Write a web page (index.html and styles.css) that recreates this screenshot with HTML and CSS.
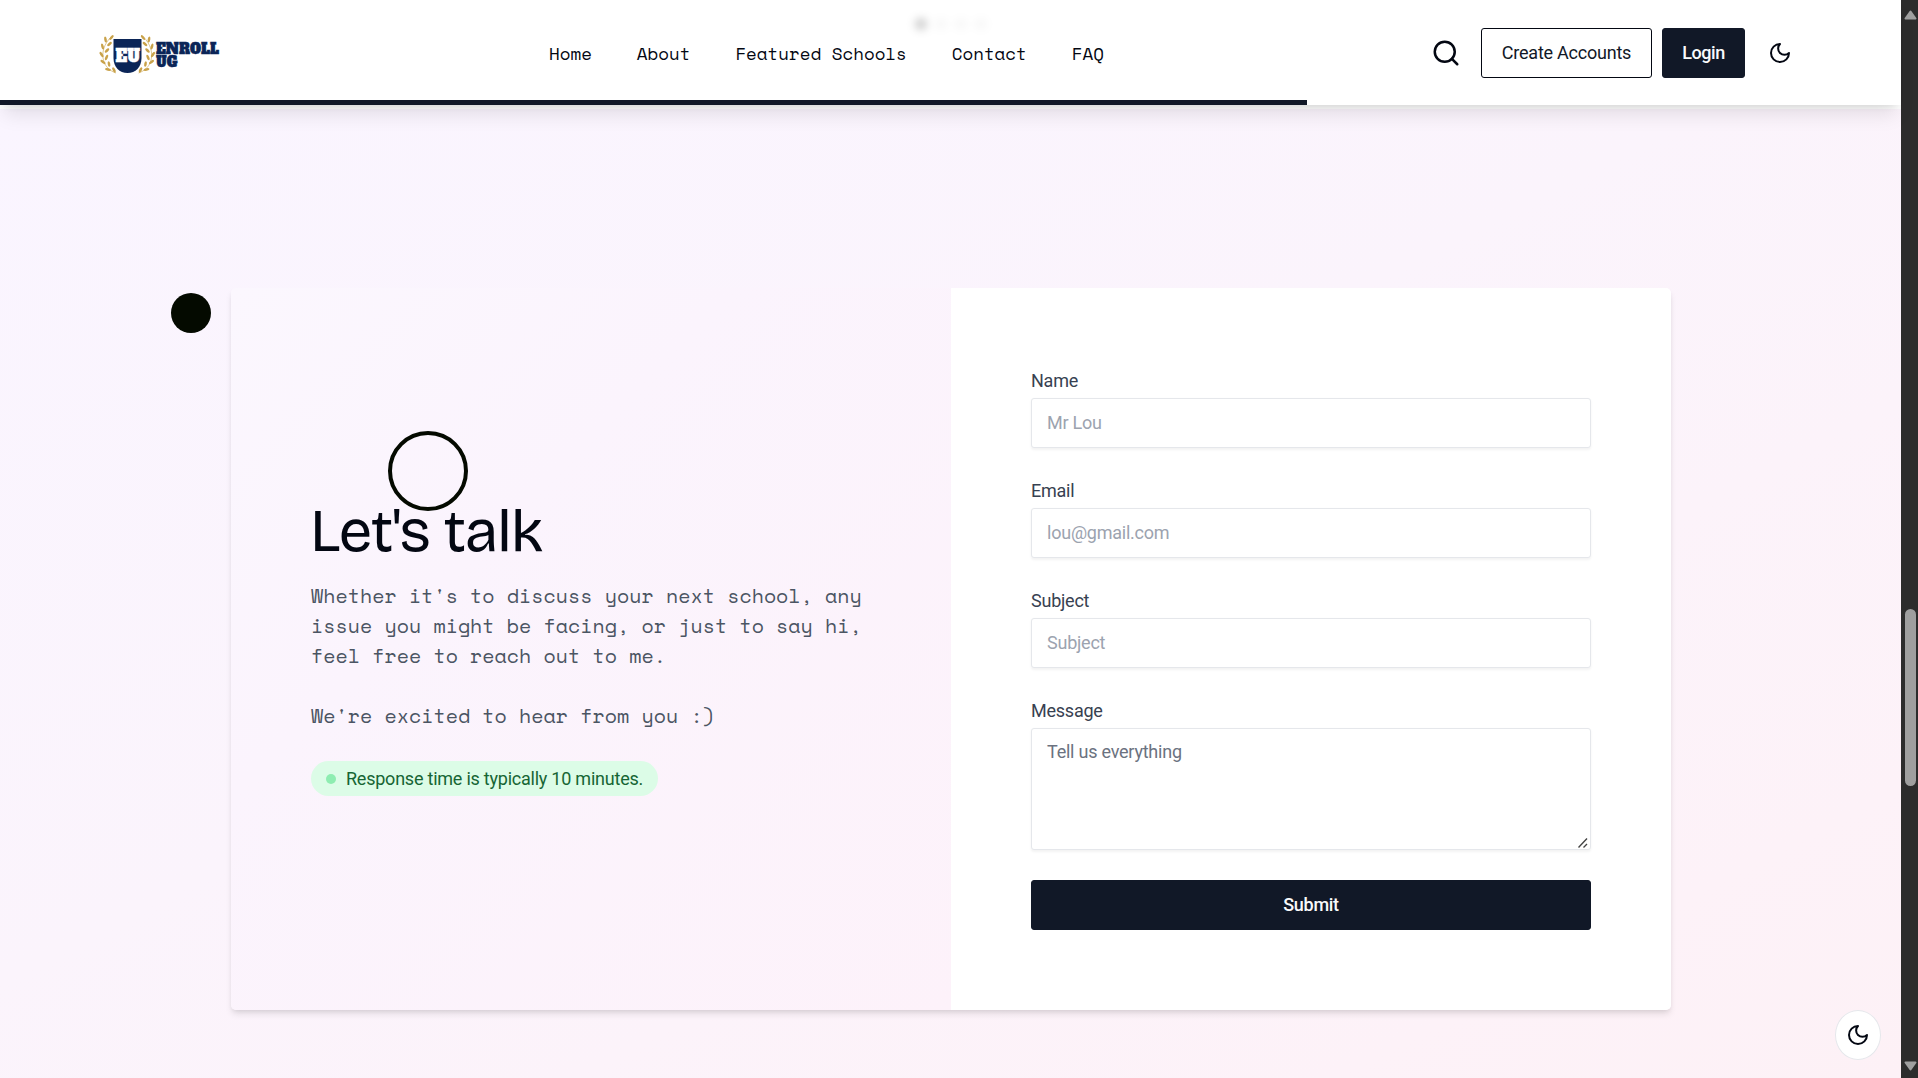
FILE: index.html
```html
<!DOCTYPE html>
<html lang="en">
<head>
<meta charset="utf-8">
<title>Enroll UG</title>
<link rel="stylesheet" href="styles.css">
</head>
<body>
<div class="page">
  <header class="header">
    <div class="bar">
      <svg class="logo" width="122" height="44" viewBox="0 0 122 44">
        <defs>
          <g id="laurel" fill="#c9a24a">
            <path d="M11 4C4 11 1 20 4 29c2 5 6 9 12 11" fill="none" stroke="#c9a24a" stroke-width=".6"/>
            <ellipse cx="11.500" cy="4.500" rx="3" ry="1.300" transform="rotate(-50 11.500 4.500)"/>
            <ellipse cx="5.500" cy="6.500" rx="3" ry="1.300" transform="rotate(-100 5.500 6.500)"/>
            <ellipse cx="9.500" cy="11" rx="2.900" ry="1.300" transform="rotate(-40 9.500 11)"/>
            <ellipse cx="2.500" cy="13.500" rx="3" ry="1.300" transform="rotate(75 2.500 13.500)"/>
            <ellipse cx="7" cy="17.500" rx="2.900" ry="1.300" transform="rotate(-45 7 17.500)"/>
            <ellipse cx="1.500" cy="21.500" rx="3" ry="1.300" transform="rotate(55 1.500 21.500)"/>
            <ellipse cx="6.500" cy="24.500" rx="2.900" ry="1.300" transform="rotate(-65 6.500 24.500)"/>
            <ellipse cx="3" cy="29" rx="3" ry="1.300" transform="rotate(35 3 29)"/>
            <ellipse cx="9" cy="31" rx="2.900" ry="1.300" transform="rotate(-100 9 31)"/>
            <ellipse cx="8" cy="36.500" rx="3" ry="1.300" transform="rotate(10 8 36.500)"/>
            <ellipse cx="14" cy="37" rx="2.900" ry="1.300" transform="rotate(60 14 37)"/>
          </g>
        </defs>
        <use href="#laurel"/>
        <use href="#laurel" transform="translate(54.500 0) scale(-1 1)"/>
        <path d="M13.500 6h28v19c0 9-6 15-14 15s-14-6-14-15z" fill="#0b2557"/>
        <text class="logo-mark" x="15.500" y="28.500" textLength="24.500" lengthAdjust="spacingAndGlyphs">EU</text>
        <text class="logo-name" x="56" y="20.500" textLength="63" lengthAdjust="spacingAndGlyphs">ENROLL</text>
        <text class="logo-name" x="56" y="34" textLength="21.500" lengthAdjust="spacingAndGlyphs">UG</text>
      </svg>
      <nav class="nav">
        <a>Home</a><a>About</a><a>Featured Schools</a><a>Contact</a><a>FAQ</a>
      </nav>
      <div class="actions">
        <svg class="icon search" width="30" height="30" viewBox="0 0 24 24"><circle cx="11" cy="11" r="8"/><path d="m21 21-4.300-4.300"/></svg>
        <button class="btn outline">Create Accounts</button>
        <button class="btn solid login">Login</button>
        <svg class="icon" width="24" height="24" viewBox="0 0 24 24"><path d="M12 3a6 6 0 0 0 9 9 9 9 0 1 1-9-9Z"/></svg>
      </div>
    </div>
    <div class="progress"></div>
    <div class="slides"><i></i><i></i><i></i><i></i></div>
  </header>

  <main class="contact">
    <section class="card">
      <div class="intro">
        <h1>Let's talk</h1>
        <p>Whether it's to discuss your next school, any<br>issue you might be facing, or just to say hi,<br>feel free to reach out to me.<br><br>We're excited to hear from you :)</p>
        <div class="badge"><span class="dot"></span><span class="badge-text">Response time is typically 10 minutes.</span></div>
      </div>
      <form class="form">
        <label><span>Name</span><input type="text" placeholder="Mr Lou"></label>
        <label><span>Email</span><input type="text" placeholder="lou@gmail.com"></label>
        <label><span>Subject</span><input type="text" placeholder="Subject"></label>
        <label class="message"><span>Message</span><textarea placeholder="Tell us everything"></textarea>
          <svg class="grip" width="10" height="10" viewBox="0 0 10 10"><path d="M.5 9.500 9 .5M5.500 9.500 9 6"/></svg></label>
        <button class="btn solid submit" type="button">Submit</button>
      </form>
    </section>
  </main>

  <div class="cursor-dot"></div>
  <div class="cursor-ring"></div>
  <button class="theme" aria-label="Toggle theme"><svg class="icon" width="24" height="24" viewBox="0 0 24 24"><path d="M12 3a6 6 0 0 0 9 9 9 9 0 1 1-9-9Z"/></svg></button>
</div>
<div class="scrollbar">
  <svg width="13" height="10" viewBox="0 0 13 10"><path d="M6.500 1.500 11.500 8.500H1.500Z"/></svg>
  <div class="thumb"></div>
  <svg width="13" height="10" viewBox="0 0 13 10"><path d="M6.500 8.500 11.500 1.500H1.500Z"/></svg>
</div>
</body>
</html>
```
FILE: styles.css
```css
* { box-sizing: border-box; }

body {
  margin: 0;
  height: 1078px;
  display: flex;
  overflow: hidden;
  color: #030712;
  font: 18px/25px Roboto, "Liberation Sans", sans-serif;
  letter-spacing: -.23px;
}

.page {
  position: relative;
  width: 1901px;
  height: 1078px;
  display: flex;
  flex-direction: column;
}

.header {
  position: relative;
  z-index: 2;
  height: 105px;
  background: #fff;
  box-shadow: 0 12.5px 18.75px -3.75px rgba(0, 0, 0, .1), 0 5px 7.5px -5px rgba(0, 0, 0, .1);
}

.bar {
  height: 100px;
  padding: 6px 109px 0 100px;
  display: flex;
  align-items: center;
}

.logo {
  display: block;
  margin-top: 3px;
  overflow: visible;
}

.logo-mark, .logo-name {
  font-family: "Alfa Slab One", "DejaVu Serif", serif;
  font-weight: 400;
  font-size: 15px;
  letter-spacing: 0;
  fill: #0b2557;
  stroke: #0b2557;
  stroke-width: .3px;
}

.logo-mark {
  font-size: 17px;
  fill: #fff;
  stroke: #fff;
}

.nav {
  display: flex;
  gap: 45px;
  margin-left: 327px;
  font-family: "Space Mono", "Liberation Mono", monospace;
  font-size: 17.5px;
  letter-spacing: 0;
  white-space: nowrap;
}

.actions {
  display: flex;
  align-items: center;
  margin-left: auto;
}

.icon {
  display: block;
  fill: none;
  stroke: #030712;
  stroke-width: 2;
  stroke-linecap: round;
  stroke-linejoin: round;
}

.search { margin-right: 20px; }

.btn {
  height: 50px;
  padding: 0 0 2px;
  border: 1px solid #030712;
  border-radius: 3px;
  font: inherit;
  letter-spacing: inherit;
  color: #111827;
  background: #fff;
}

.outline { width: 171px; margin-right: 10px; }

.solid {
  color: #f9fafb;
  background: #111827;
  border-color: #111827;
  font-weight: 500;
  letter-spacing: -.45px;
}

.login { width: 83px; margin-right: 23px; }

.submit { letter-spacing: -.3px; }

.progress {
  width: 1307px;
  height: 5px;
  background: #111827;
}

.slides {
  position: absolute;
  top: 18px;
  left: 915px;
  display: flex;
  gap: 8px;
  filter: blur(4px);
}

.slides i {
  width: 12px;
  height: 12px;
  border-radius: 50%;
  background: rgba(0, 0, 0, .03);
}

.slides i:first-child { background: rgba(0, 0, 0, .2); }

.contact {
  flex: 1;
  padding: 179px 230px 0 231px;
  border-top: 4px solid #fff;
  background: linear-gradient(to bottom right, #faf5ff, #fbf4fc 45%, #fdf2f8 85%, #fdf1f6) padding-box;
}

.card {
  display: grid;
  grid-template-columns: repeat(2, minmax(0, 1fr));
  height: 722px;
  border-radius: 5px;
  box-shadow: 0 5px 7.5px -1.25px rgba(0, 0, 0, .1), 0 2.5px 5px -2.5px rgba(0, 0, 0, .1);
}

.intro {
  display: flex;
  flex-direction: column;
  justify-content: center;
  align-items: flex-start;
  padding: 0 80px;
  border-radius: 5px 0 0 5px;
  background: linear-gradient(to bottom right, #fbf7fe, #fbf4fd 35%, #fdf2fa);
}

h1 {
  margin: -1px 0 20px -1px;
  font: 400 60px/60px "Bricolage Grotesque", Inter, "Liberation Sans", sans-serif;
  letter-spacing: -1.2px;
}

p {
  margin: 0 0 30px;
  color: #4b5563;
  font: 20px/30px "Space Mono", "Liberation Mono", monospace;
  letter-spacing: 0;
  white-space: nowrap;
}

.badge {
  display: flex;
  align-items: center;
  gap: 10px;
  height: 35px;
  padding: 0 15px;
  border-radius: 18px;
  color: #166534;
  background: #dcfce7;
  white-space: nowrap;
}

.badge-text { padding-bottom: 1px; }

.dot {
  width: 10px;
  height: 10px;
  border-radius: 50%;
  background: #8eedb1;
}

.form {
  display: flex;
  flex-direction: column;
  gap: 30px;
  padding: 80px;
  border-radius: 0 5px 5px 0;
  background: #fff;
  color: #374151;
}

label {
  display: flex;
  flex-direction: column;
  gap: 5px;
}

.message { position: relative; }

.grip {
  position: absolute;
  right: 3px;
  bottom: 2px;
  fill: none;
  stroke: #444;
  stroke-width: 1.4;
}

input, textarea {
  display: block;
  width: 100%;
  height: 50px;
  margin: 0;
  padding: 0 15px 2px;
  border: 1px solid #e5e7eb;
  border-radius: 3px;
  background: #fff;
  box-shadow: 0 1.25px 2.5px rgba(0, 0, 0, .05);
  font: inherit;
  letter-spacing: inherit;
}

textarea {
  height: 122px;
  padding-top: 10px;
  resize: none;
}

input::placeholder { color: #9ca3af; }
textarea::placeholder { color: #6b7280; }

.cursor-dot, .cursor-ring {
  position: absolute;
  z-index: 3;
  border-radius: 50%;
}

.cursor-dot {
  left: 171px;
  top: 293px;
  width: 40px;
  height: 40px;
  background: #040a00;
}

.cursor-ring {
  left: 388px;
  top: 431px;
  width: 80px;
  height: 80px;
  border: 4px solid #040a00;
}

.theme {
  position: absolute;
  right: 20px;
  bottom: 18px;
  width: 46px;
  height: 50px;
  padding: 0;
  display: flex;
  align-items: center;
  justify-content: center;
  border: 1px solid #e5e7eb;
  border-radius: 50%;
  background: #fff;
}

.scrollbar {
  width: 17px;
  height: 1078px;
  padding: 10px 0 7px 3px;
  display: flex;
  flex-direction: column;
  background: #2c2c2c;
}

.scrollbar svg { fill: #9f9f9f; stroke: #9f9f9f; stroke-width: 2; stroke-linejoin: round; }

.thumb {
  width: 11px;
  height: 177px;
  margin: 589px 0 auto 1px;
  border-radius: 6px;
  background: #9f9f9f;
}
```
